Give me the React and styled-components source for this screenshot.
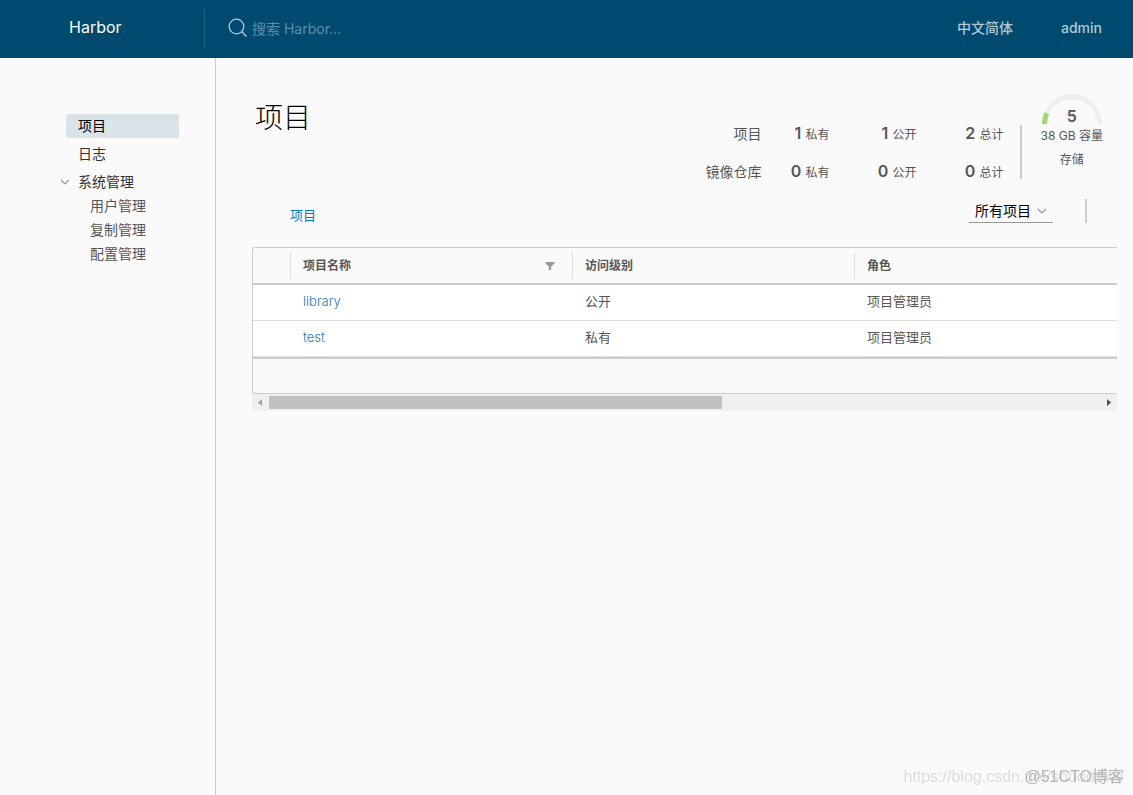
import styled, { createGlobalStyle } from "styled-components";
import React, { useState } from "react";

const projects = [
  { name: "library", access: "公开", role: "项目管理员" },
  { name: "test", access: "私有", role: "项目管理员" },
];

const stats = [
  { label: "项目", values: [[1, "私有"], [1, "公开"], [2, "总计"]] },
  { label: "镜像仓库", values: [[0, "私有"], [0, "公开"], [0, "总计"]] },
];

const Chevron = ({ size = 10 }) => (
  <svg width={size} height={size} viewBox="0 0 10 10" fill="none" stroke="#9a9a9a" strokeWidth="1.2">
    <path d="M1 3l4 4 4-4" />
  </svg>
);

const App = () => {
  const [filter, setFilter] = useState("all");
  return (
    <Page>
      <GlobalStyle />
      <Header>
        <Brand href="/">Harbor</Brand>
        <Search>
          <svg width="20" height="20" viewBox="0 0 20 20" fill="none" stroke="#b3cad6" strokeWidth="1.3">
            <circle cx="8.5" cy="8.5" r="7.3" />
            <path d="M13.8 13.8l4.7 4.7" />
          </svg>
          <input type="text" placeholder="搜索 Harbor..." aria-label="搜索 Harbor..." />
        </Search>
        <HeaderActions>
          <button type="button">中文简体</button>
          <button type="button">admin</button>
        </HeaderActions>
      </Header>
      <Body>
        <Sidebar>
          <NavLink href="#projects" $active>项目</NavLink>
          <NavLink href="#logs">日志</NavLink>
          <NavGroup>
            <NavToggle type="button">
              <Chevron />
              系统管理
            </NavToggle>
            <SubLink href="#users">用户管理</SubLink>
            <SubLink href="#replication">复制管理</SubLink>
            <SubLink href="#config">配置管理</SubLink>
          </NavGroup>
        </Sidebar>
        <Main>
          <Top>
            <h1>项目</h1>
            <Summary>
              <StatTable>
                <tbody>
                  {stats.map((row) => (
                    <tr key={row.label}>
                      <th scope="row">{row.label}</th>
                      {row.values.map(([count, unit]) => (
                        <td key={unit}>
                          <strong>{count}</strong> {unit}
                        </td>
                      ))}
                    </tr>
                  ))}
                </tbody>
              </StatTable>
              <SummaryRule />
              <Storage>
                <Gauge>
                  <svg width="60" height="30" viewBox="0 0 60 30" fill="none" strokeWidth="5">
                    <path d="M2.5 30a27.5 27.5 0 0 1 55 0" stroke="#eeeeee" />
                    <path d="M2.5 30a27.5 27.5 0 0 1 2.2-10.8" stroke="#a3d47a" />
                  </svg>
                  <strong>5</strong>
                </Gauge>
                <span>38 GB 容量</span>
                <span>存储</span>
              </Storage>
            </Summary>
          </Top>
          <Toolbar>
            <Tab href="#projects">项目</Tab>
            <Tools>
              <Picker>
                <select aria-label="所有项目" value={filter} onChange={(e) => setFilter(e.target.value)}>
                  <option value="all">所有项目</option>
                </select>
                <Chevron />
              </Picker>
              <Rule />
            </Tools>
          </Toolbar>
          <Grid>
            <GridTable>
              <colgroup>
                <col width="37" />
                <col width="282" />
                <col width="282" />
                <col width="282" />
              </colgroup>
              <thead>
                <tr>
                  <td />
                  <th scope="col">
                    <HeadCell>
                      项目名称
                      <FilterButton type="button" aria-label="项目名称">
                        <svg width="10" height="8" viewBox="0 0 10 8" fill="#9a9a9a">
                          <path d="M0.5 0h9v1.5L6.2 4.6V8H3.8V4.6L0.5 1.5z" />
                        </svg>
                      </FilterButton>
                    </HeadCell>
                  </th>
                  <th scope="col"><HeadCell>访问级别</HeadCell></th>
                  <th scope="col"><HeadCell>角色</HeadCell></th>
                </tr>
              </thead>
              <tbody>
                {projects.map((p) => (
                  <tr key={p.name}>
                    <td />
                    <td><a href={"#" + p.name}>{p.name}</a></td>
                    <td>{p.access}</td>
                    <td>{p.role}</td>
                  </tr>
                ))}
              </tbody>
            </GridTable>
            <GridFooter />
          </Grid>
          <Scrollbar>
            <svg width="17" height="17" viewBox="0 0 17 17" fill="#a3a3a3">
              <path d="M10 5v7L6 8.5z" />
            </svg>
            <Track><Thumb /></Track>
            <svg width="17" height="17" viewBox="0 0 17 17" fill="#505050">
              <path d="M7 5v7l4-3.5z" />
            </svg>
          </Scrollbar>
        </Main>
      </Body>
      <Watermark>
        <span>https://blog.csdn.net/shooopwe</span>
        <b>@51CTO博客</b>
      </Watermark>
    </Page>
  );
};

const GlobalStyle = createGlobalStyle`
  * {
    box-sizing: border-box;
  }
  body {
    margin: 0;
    background: #fafafa;
    color: #565656;
    font-family: Inter, "Noto Sans CJK SC", sans-serif;
    font-size: 14px;
    line-height: 24px;
  }
  a {
    text-decoration: none;
  }
  button, input, select {
    font: inherit;
    border: none;
    background: none;
    padding: 0;
  }
  button {
    cursor: pointer;
  }
  svg {
    display: block;
    flex: none;
  }
`;

const Page = styled.div`
  display: flex;
  flex-direction: column;
  min-height: 100vh;
`;

const Header = styled.header`
  display: flex;
  align-items: center;
  height: 58px;
  padding: 0 31px 2px 0;
  background: #004a70;
`;
const Brand = styled.a`
  width: 205px;
  height: 40px;
  padding-left: 69px;
  border-right: 1px solid #1f6080;
  color: #fafafa;
  font-size: 16px;
  line-height: 38px;
`;
const Search = styled.label`
  display: flex;
  flex: 1;
  align-items: center;
  gap: 4px;
  padding-left: 23px;
  input {
    flex: 1;
    min-width: 0;
    padding-top: 2px;
    outline: none;
    color: #fafafa;
  }
  input::placeholder {
    color: #5f8fa8;
    opacity: 1;
  }
`;
const HeaderActions = styled.div`
  display: flex;
  gap: 48px;
  button {
    color: #b3c9d4;
    font-weight: 500;
  }
`;

const Body = styled.div`
  display: flex;
  flex: 1;
`;
const Sidebar = styled.nav`
  display: flex;
  flex: none;
  flex-direction: column;
  gap: 4px;
  width: 216px;
  padding: 56px 36px 24px 66px;
  border-right: 1px solid #cccccc;
`;
const NavLink = styled.a`
  padding-left: 12px;
  border-radius: 3px 0 0 3px;
  background: ${(props) => (props.$active ? "#d9e4ea" : "transparent")};
  color: ${(props) => (props.$active ? "#000000" : "#313131")};
`;
const NavGroup = styled.div`
  display: flex;
  flex-direction: column;
`;
const NavToggle = styled.button`
  display: flex;
  align-items: center;
  gap: 8px;
  margin-left: -6px;
  color: #313131;
`;
const SubLink = styled.a`
  padding-left: 24px;
  color: #565656;
`;

const Main = styled.main`
  flex: 1;
  min-width: 0;
  padding: 36px 16px 24px 36px;
`;
const Top = styled.div`
  display: flex;
  justify-content: space-between;
  h1 {
    margin: 0;
    padding: 8px 0 0 3px;
    color: #000000;
    font-size: 28px;
    font-weight: 300;
    line-height: 32px;
  }
`;
const Summary = styled.div`
  display: flex;
  align-items: flex-end;
  padding-right: 14px;
`;
const StatTable = styled.table`
  border-collapse: collapse;
  margin: 21px 16px 0 0;
  th, td {
    height: 38px;
    padding: 0;
    text-align: right;
    white-space: nowrap;
  }
  th {
    font-weight: 400;
  }
  td {
    min-width: 87px;
    font-size: 12px;
  }
  td:nth-child(2) {
    min-width: 68px;
  }
  strong {
    margin-right: 1px;
    font-size: 16px;
    font-weight: 600;
  }
`;
const Rule = styled.div`
  width: 2px;
  height: 24px;
  background: #cccccc;
`;
const SummaryRule = styled(Rule)`
  height: 54px;
  margin-bottom: 12px;
`;
const Storage = styled.div`
  display: flex;
  flex-direction: column;
  align-items: center;
  align-self: flex-start;
  margin-left: 19px;
  font-size: 12px;
`;
const Gauge = styled.div`
  position: relative;
  strong {
    position: absolute;
    inset: 10px 0 auto;
    font-size: 16px;
    font-weight: 600;
    text-align: center;
  }
`;

const Toolbar = styled.div`
  display: flex;
  align-items: flex-start;
  justify-content: space-between;
  height: 56px;
  padding: 8px 30px 0 38px;
`;
const Tab = styled.a`
  padding-top: 4px;
  color: #007cbb;
  font-size: 13px;
`;
const Tools = styled.div`
  display: flex;
  align-items: flex-end;
  gap: 32px;
`;
const Picker = styled.div`
  display: flex;
  align-items: center;
  height: 24px;
  border-bottom: 1px solid #9a9a9a;
  padding: 0 6px;
  select {
    appearance: none;
    width: 62px;
    color: #000000;
  }
`;

const Grid = styled.div`
  overflow: hidden;
  border: 1px solid #cccccc;
  border-right: none;
  border-radius: 3px 0 0 3px;
`;
const GridTable = styled.table`
  width: 100%;
  min-width: 883px;
  table-layout: fixed;
  border-collapse: separate;
  border-spacing: 0;
  border-bottom: 2px solid #cccccc;
  th {
    height: 37px;
    padding: 0;
    font-size: 12px;
    font-weight: 700;
    text-align: left;
  }
  thead th, thead td {
    border-bottom: 2px solid #cccccc;
  }
  tbody td {
    height: 36px;
    padding: 0 13px 3px;
    border-bottom: 1px solid #dddddd;
    background: #ffffff;
    font-size: 13px;
  }
  a {
    color: #1f78b8;
    font-weight: 300;
  }
`;
const HeadCell = styled.div`
  display: flex;
  align-items: center;
  justify-content: space-between;
  height: 26px;
  padding: 0 17px 0 12px;
  border-left: 1px solid #dddddd;
`;
const FilterButton = styled.button`
  padding: 4px 0;
`;
const GridFooter = styled.div`
  height: 34px;
`;

const Scrollbar = styled.div`
  display: flex;
  align-items: center;
  background: #f0f0f0;
`;
const Track = styled.div`
  display: grid;
  flex: 1;
  grid-template-columns: 6fr 5fr;
`;
const Thumb = styled.div`
  height: 13px;
  background: #c1c1c1;
`;

const Watermark = styled.div`
  position: fixed;
  right: 9px;
  bottom: 6px;
  display: grid;
  justify-items: end;
  font-family: "Liberation Sans", "Noto Sans CJK SC", sans-serif;
  font-size: 16px;
  pointer-events: none;
  span, b {
    grid-area: 1 / 1;
    font-weight: 400;
  }
  span {
    color: #dcdcdc;
  }
  b {
    color: #b4b4b4;
  }
`;

export default App;
